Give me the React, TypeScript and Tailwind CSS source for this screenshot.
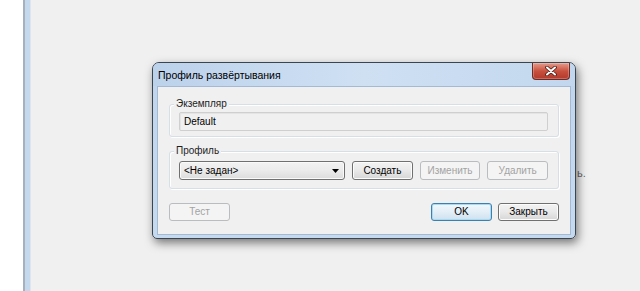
import React from "react";

const font = "font-['Liberation_Sans','Noto_Sans',sans-serif]";

const Btn: React.FC<{ label: string; disabled?: boolean; primary?: boolean; className?: string }> = ({
  label,
  disabled,
  primary,
  className = "",
}) => {
  const look = disabled
    ? "border-[#b9bdc0] bg-[#f4f4f4] text-[#a3a3a3]"
    : primary
    ? "border-[#3c7fb1] bg-gradient-to-b from-[#f2f8fc] via-[#e3eef7] to-[#cfe1ef] text-black shadow-[inset_0_0_0_1px_#a8daf2]"
    : "border-[#707070] bg-gradient-to-b from-[#f3f3f3] via-[#e9e9e9] to-[#d6d6d6] text-black shadow-[inset_0_0_0_1px_#fcfcfc]";
  return (
    <div
      className={`h-[18px] flex items-center justify-center rounded-[3px] border text-[10px] leading-none ${look} ${className}`}
    >
      {label}
    </div>
  );
};

const Group: React.FC<{ title: string; className?: string; children: React.ReactNode }> = ({
  title,
  className = "",
  children,
}) => (
  <div className={`relative mx-[11px] rounded-[3px] border border-[#d5dfe5] shadow-[inset_1px_1px_0_#ffffff,1px_1px_0_#ffffff] ${className}`}>
    <span className="absolute left-[4px] top-[-8px] bg-[#f0f0f0] px-[2px] text-[10px] leading-[14px] text-[#1e1e1e]">
      {title}
    </span>
    {children}
  </div>
);

export default function App() {
  return (
    <div className={`w-[640px] h-[291px] flex overflow-hidden bg-[#f0f0f0] ${font}`}>
      <div className="w-[23px] bg-white" />
      <div className="w-[8px] border-l-2 border-l-[#a7b1bc] border-r border-r-[#dde6ef] bg-[#c4d8ee]" />
      <div className="relative flex-1">
        <span className="absolute left-[546px] top-[165px] text-[11px] text-[#6a6a6a]">ь.</span>

        <div className="absolute left-[121px] top-[62px] w-[424px] h-[177px] flex flex-col rounded-t-[7px] rounded-b-[5px] border border-[#3b4550] bg-gradient-to-b from-[#c0d5ec] to-[#c6daef] shadow-[2px_4px_10px_rgba(0,0,0,0.5)]">
          <div className="h-[23px] flex justify-between rounded-t-[6px] bg-gradient-to-r from-[#bcd2eb] via-[#cfe0f3] to-[#c2d7ee]">
            <span className="pl-[5px] pt-[6px] text-[10.5px] leading-[12px] text-black">Профиль развёртывания</span>
            <div className="mr-[5px] w-[38px] h-[17px] flex items-center justify-center rounded-b-[4px] border border-t-0 border-[#6e2a23] bg-gradient-to-b from-[#e39b8c] via-[#c8503e] to-[#b3392a] shadow-[inset_0_0_0_1px_rgba(255,255,255,0.25)]">
              <svg width="12" height="10" viewBox="0 0 12 10">
                <path d="M2 1.5 L10 8.5 M10 1.5 L2 8.5" stroke="#4a1a14" strokeWidth="3.6" strokeLinecap="round" />
                <path d="M2 1.5 L10 8.5 M10 1.5 L2 8.5" stroke="#ffffff" strokeWidth="2" strokeLinecap="round" />
              </svg>
            </div>
          </div>

          <div className="flex-1 mx-[4px] mb-[3px] flex flex-col border border-[#a4b9d3] bg-[#f0f0f0] text-black">
            <Group title="Экземпляр" className="mt-[17px] pt-[7px] pb-[5px] pl-[9px] pr-[10px]">
              <div className="h-[19px] flex items-center pl-[4px] rounded-[2px] border border-[#cfcfcf] shadow-[inset_1px_1px_0_#e4e4e4] bg-[#f0f0f0] text-[10px]">
                Default
              </div>
            </Group>

            <Group title="Профиль" className="mt-[14px] pt-[9px] pb-[8px] pl-[9px] pr-[10px]">
              <div className="flex gap-[7px]">
                <div className="w-[167px] h-[19px] flex items-center justify-between pl-[4px] pr-[5px] rounded-[3px] border border-[#707070] bg-gradient-to-b from-[#f2f2f2] via-[#ebebeb] to-[#dcdcdc] shadow-[inset_0_0_0_1px_#fafafa] text-[10px]">
                  <span>&lt;Не задан&gt;</span>
                  <svg width="7" height="4" viewBox="0 0 7 4">
                    <path d="M0 0 L7 0 L3.5 4 Z" fill="#000" />
                  </svg>
                </div>
                <Btn label="Создать" className="w-[61px] h-[19px]" />
                <Btn label="Изменить" disabled className="w-[61px] h-[19px]" />
                <Btn label="Удалить" disabled className="w-[61px] h-[19px]" />
              </div>
            </Group>

            <div className="mt-[14px] mx-[11px] flex items-center">
              <Btn label="Тест" disabled className="w-[61px]" />
              <div className="flex-1" />
              <Btn label="OK" primary className="w-[61px]" />
              <Btn label="Закрыть" className="w-[61px] ml-[6px]" />
            </div>
          </div>
        </div>
      </div>
    </div>
  );
}
